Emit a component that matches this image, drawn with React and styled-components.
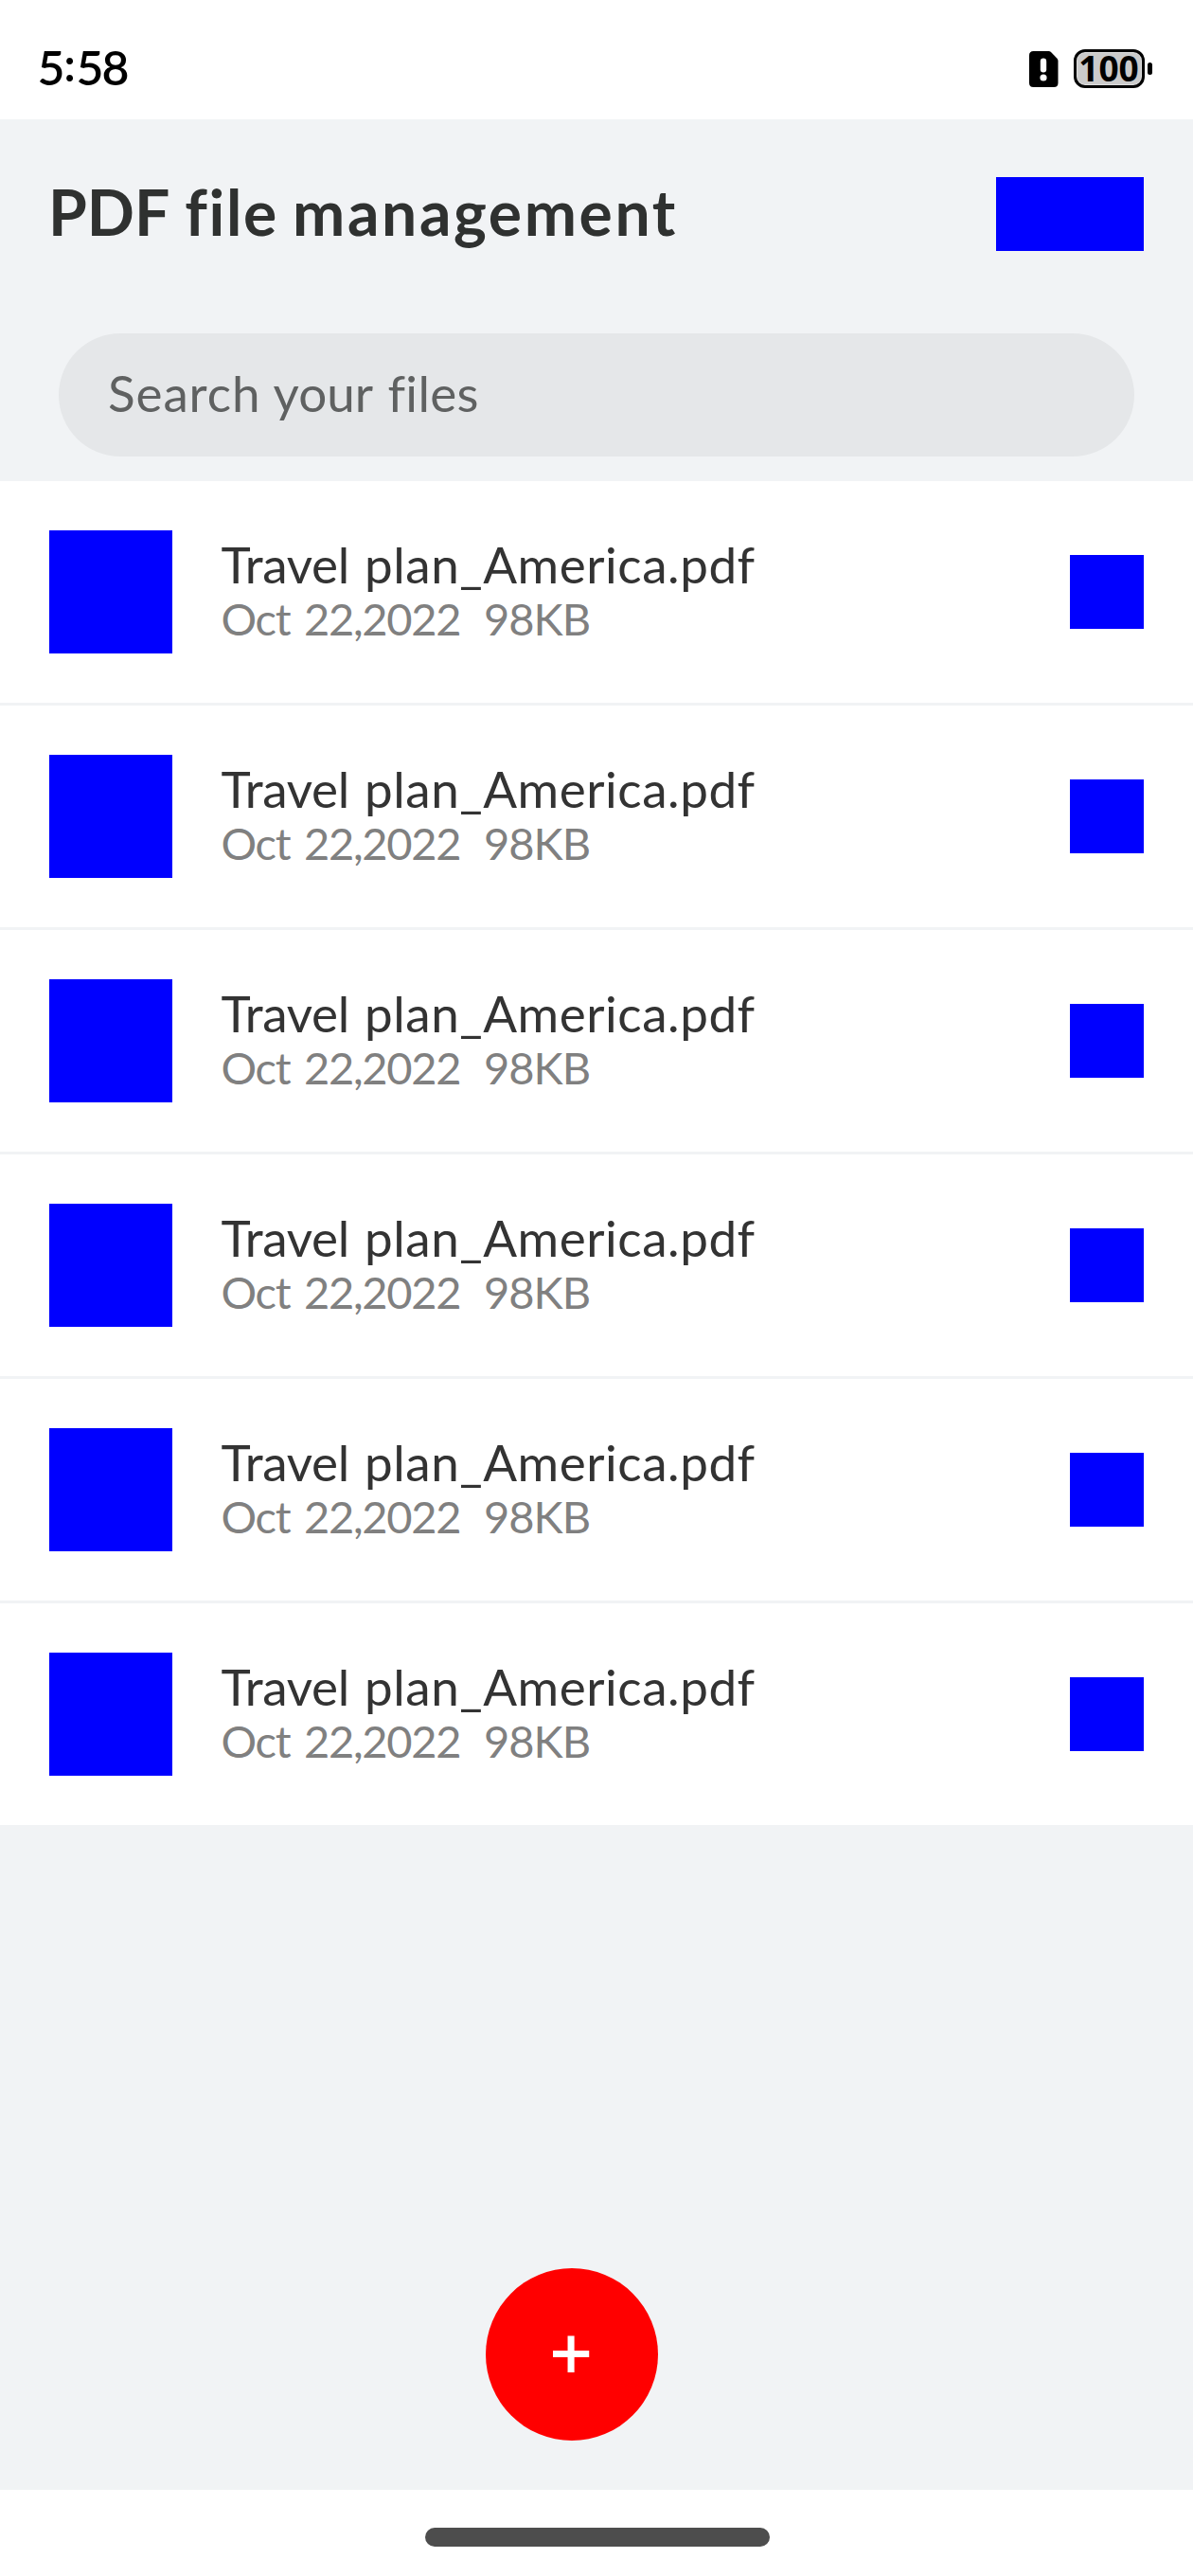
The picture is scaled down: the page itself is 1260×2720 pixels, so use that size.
import React from "react";
import styled, { createGlobalStyle } from "styled-components";

const GlobalStyle = createGlobalStyle`
  * { box-sizing: border-box; }
  body {
    margin: 0;
    background: #fff;
    font-family: Lato, "Noto Sans", sans-serif;
    font-variant-ligatures: none;
  }
`;

const Screen = styled.div`
  display: flex;
  flex-direction: column;
  width: 1260px;
  height: 2720px;
  overflow: hidden;
  background: #f1f3f5;
`;

const StatusBar = styled.header`
  display: flex;
  align-items: center;
  justify-content: space-between;
  flex: none;
  height: 126px;
  padding: 15px 43px 0 39.5px;
  background: #fff;
`;

const Clock = styled.div`
  display: flex;
  font-size: 50px;
  font-weight: 600;
  line-height: 60px;
  color: #000;
`;

const Digits = styled.span`
  letter-spacing: -2px;
`;

const Colon = styled.span`
  width: 14px;
  text-align: center;
  line-height: 52px;
`;

const StatusIcons = styled.div`
  display: flex;
  align-items: center;
  padding-top: 4px;
`;

const SimIcon = styled.svg`
  width: 31px;
  height: 38px;
  margin-right: 16px;
`;

const Battery = styled.div`
  display: flex;
  align-items: center;
  justify-content: center;
  width: 75px;
  height: 41px;
  border: 3px solid #000;
  border-radius: 12px;
  background: #cbcbcb;
  color: #000;
  font: 700 37px/34px "Noto Sans", sans-serif;
  padding-bottom: 1px;
  box-shadow: inset 0 0 0 1px #dedede;
`;

const BatteryTip = styled.span`
  width: 5px;
  height: 13px;
  margin-left: 3.5px;
  border-radius: 2.5px;
  background: #000;
`;

const TitleBar = styled.div`
  display: flex;
  align-items: center;
  justify-content: space-between;
  flex: none;
  height: 200px;
  padding: 0 52px 0 51px;
`;

const Title = styled.h1`
  display: flex;
  margin: 0;
  padding-bottom: 5px;
  font-size: 66px;
  font-weight: 700;
  line-height: 80px;
  color: #2f3130;
`;

const Word = styled.span`
  flex: none;
  width: ${(p) => (p.$width ? `${p.$width}px` : "auto")};
  letter-spacing: ${(p) => p.$track || 0}px;
  white-space: pre;
`;

const Swatch = styled.div`
  flex: none;
  width: ${(p) => p.$width}px;
  height: ${(p) => p.$height}px;
  background: #00f;
`;

const SearchField = styled.div`
  display: flex;
  align-items: center;
  flex: none;
  height: 130px;
  margin: 26px 62px 26px;
  padding: 0 52px 4px;
  border-radius: 65px;
  background: #e5e7e9;
  font-size: 53px;
  line-height: 64px;
  color: #5f6161;
`;

const FileList = styled.ul`
  display: flex;
  flex-direction: column;
  gap: 3px;
  flex: none;
  margin: 0;
  padding: 0;
  list-style: none;
`;

const FileRow = styled.li`
  display: flex;
  align-items: center;
  height: 234px;
  padding: 0 52px;
  background: #fff;
`;

const FileInfo = styled.div`
  flex: 1;
  padding: 0 0 5px 51.5px;
`;

const FileName = styled.div`
  display: flex;
  font-size: 53px;
  line-height: 61px;
  color: #333;
`;

const FileMeta = styled.div`
  display: flex;
  font-size: 47px;
  line-height: 54px;
  color: #808080;
`;

const Actions = styled.div`
  display: flex;
  flex: 1;
  align-items: flex-end;
  padding: 0 0 52px 513px;
`;

const AddButton = styled.button`
  display: flex;
  align-items: center;
  justify-content: center;
  width: 182px;
  height: 182px;
  padding: 0 2px 6px 0;
  border: 0;
  border-radius: 50%;
  background: #f00;
  color: #fff;
  font: 600 80px/100px "Open Sans", sans-serif;
`;

const NavBar = styled.footer`
  display: flex;
  justify-content: center;
  flex: none;
  height: 91px;
  padding: 40px 0 0 2px;
  background: #fff;
`;

const HomeIndicator = styled.div`
  width: 364px;
  height: 20px;
  border-radius: 10px;
  background: #4d4d4d;
`;

const files = Array.from({ length: 6 }, (_, id) => ({ id }));

function File() {
  return (
    <FileRow>
      <Swatch $width={130} $height={130} />
      <FileInfo>
        <FileName>
          <Word $width={151.5} $track={-0.3}>{"Travel "}</Word>
          <Word $track={0.55}>plan_America.pdf</Word>
        </FileName>
        <FileMeta>
          <Word $width={87.5} $track={-1.2}>{"Oct "}</Word>
          <Word $width={190} $track={-1.3}>{"22,2022  "}</Word>
          <Word $track={-1}>98KB</Word>
        </FileMeta>
      </FileInfo>
      <Swatch $width={78} $height={78} />
    </FileRow>
  );
}

export default function App() {
  return (
    <>
      <GlobalStyle />
      <Screen>
        <StatusBar>
          <Clock>
            <Digits>5</Digits>
            <Colon>:</Colon>
            <Digits>58</Digits>
          </Clock>
          <StatusIcons>
            <SimIcon viewBox="0 0 31 38">
              <path d="M4.5 0H20.5Q22 0 23 1L29.5 7.8Q30.5 9 30.5 10.5V33.5Q30.5 38 26 38H4.5Q0 38 0 33.5V4.5Q0 0 4.5 0Z" />
              <rect x="11.8" y="7.5" width="6.4" height="15" rx="3.2" fill="#fff" />
              <circle cx="15" cy="28" r="3.6" fill="#fff" />
            </SimIcon>
            <Battery>100</Battery>
            <BatteryTip />
          </StatusIcons>
        </StatusBar>

        <TitleBar>
          <Title>
            <Word $width={144.3}>{"PDF "}</Word>
            <Word $width={113.8} $track={1.6}>{"file "}</Word>
            <Word $track={2.6}>management</Word>
          </Title>
          <Swatch $width={156} $height={78} />
        </TitleBar>

        <SearchField>
          <Word $width={174.6} $track={0.9}>{"Search "}</Word>
          <Word $width={120.8}>{"your "}</Word>
          <Word $track={0.35}>files</Word>
        </SearchField>

        <FileList>
          {files.map((f) => (
            <File key={f.id} />
          ))}
        </FileList>

        <Actions>
          <AddButton aria-label="Add file">+</AddButton>
        </Actions>

        <NavBar>
          <HomeIndicator />
        </NavBar>
      </Screen>
    </>
  );
}
